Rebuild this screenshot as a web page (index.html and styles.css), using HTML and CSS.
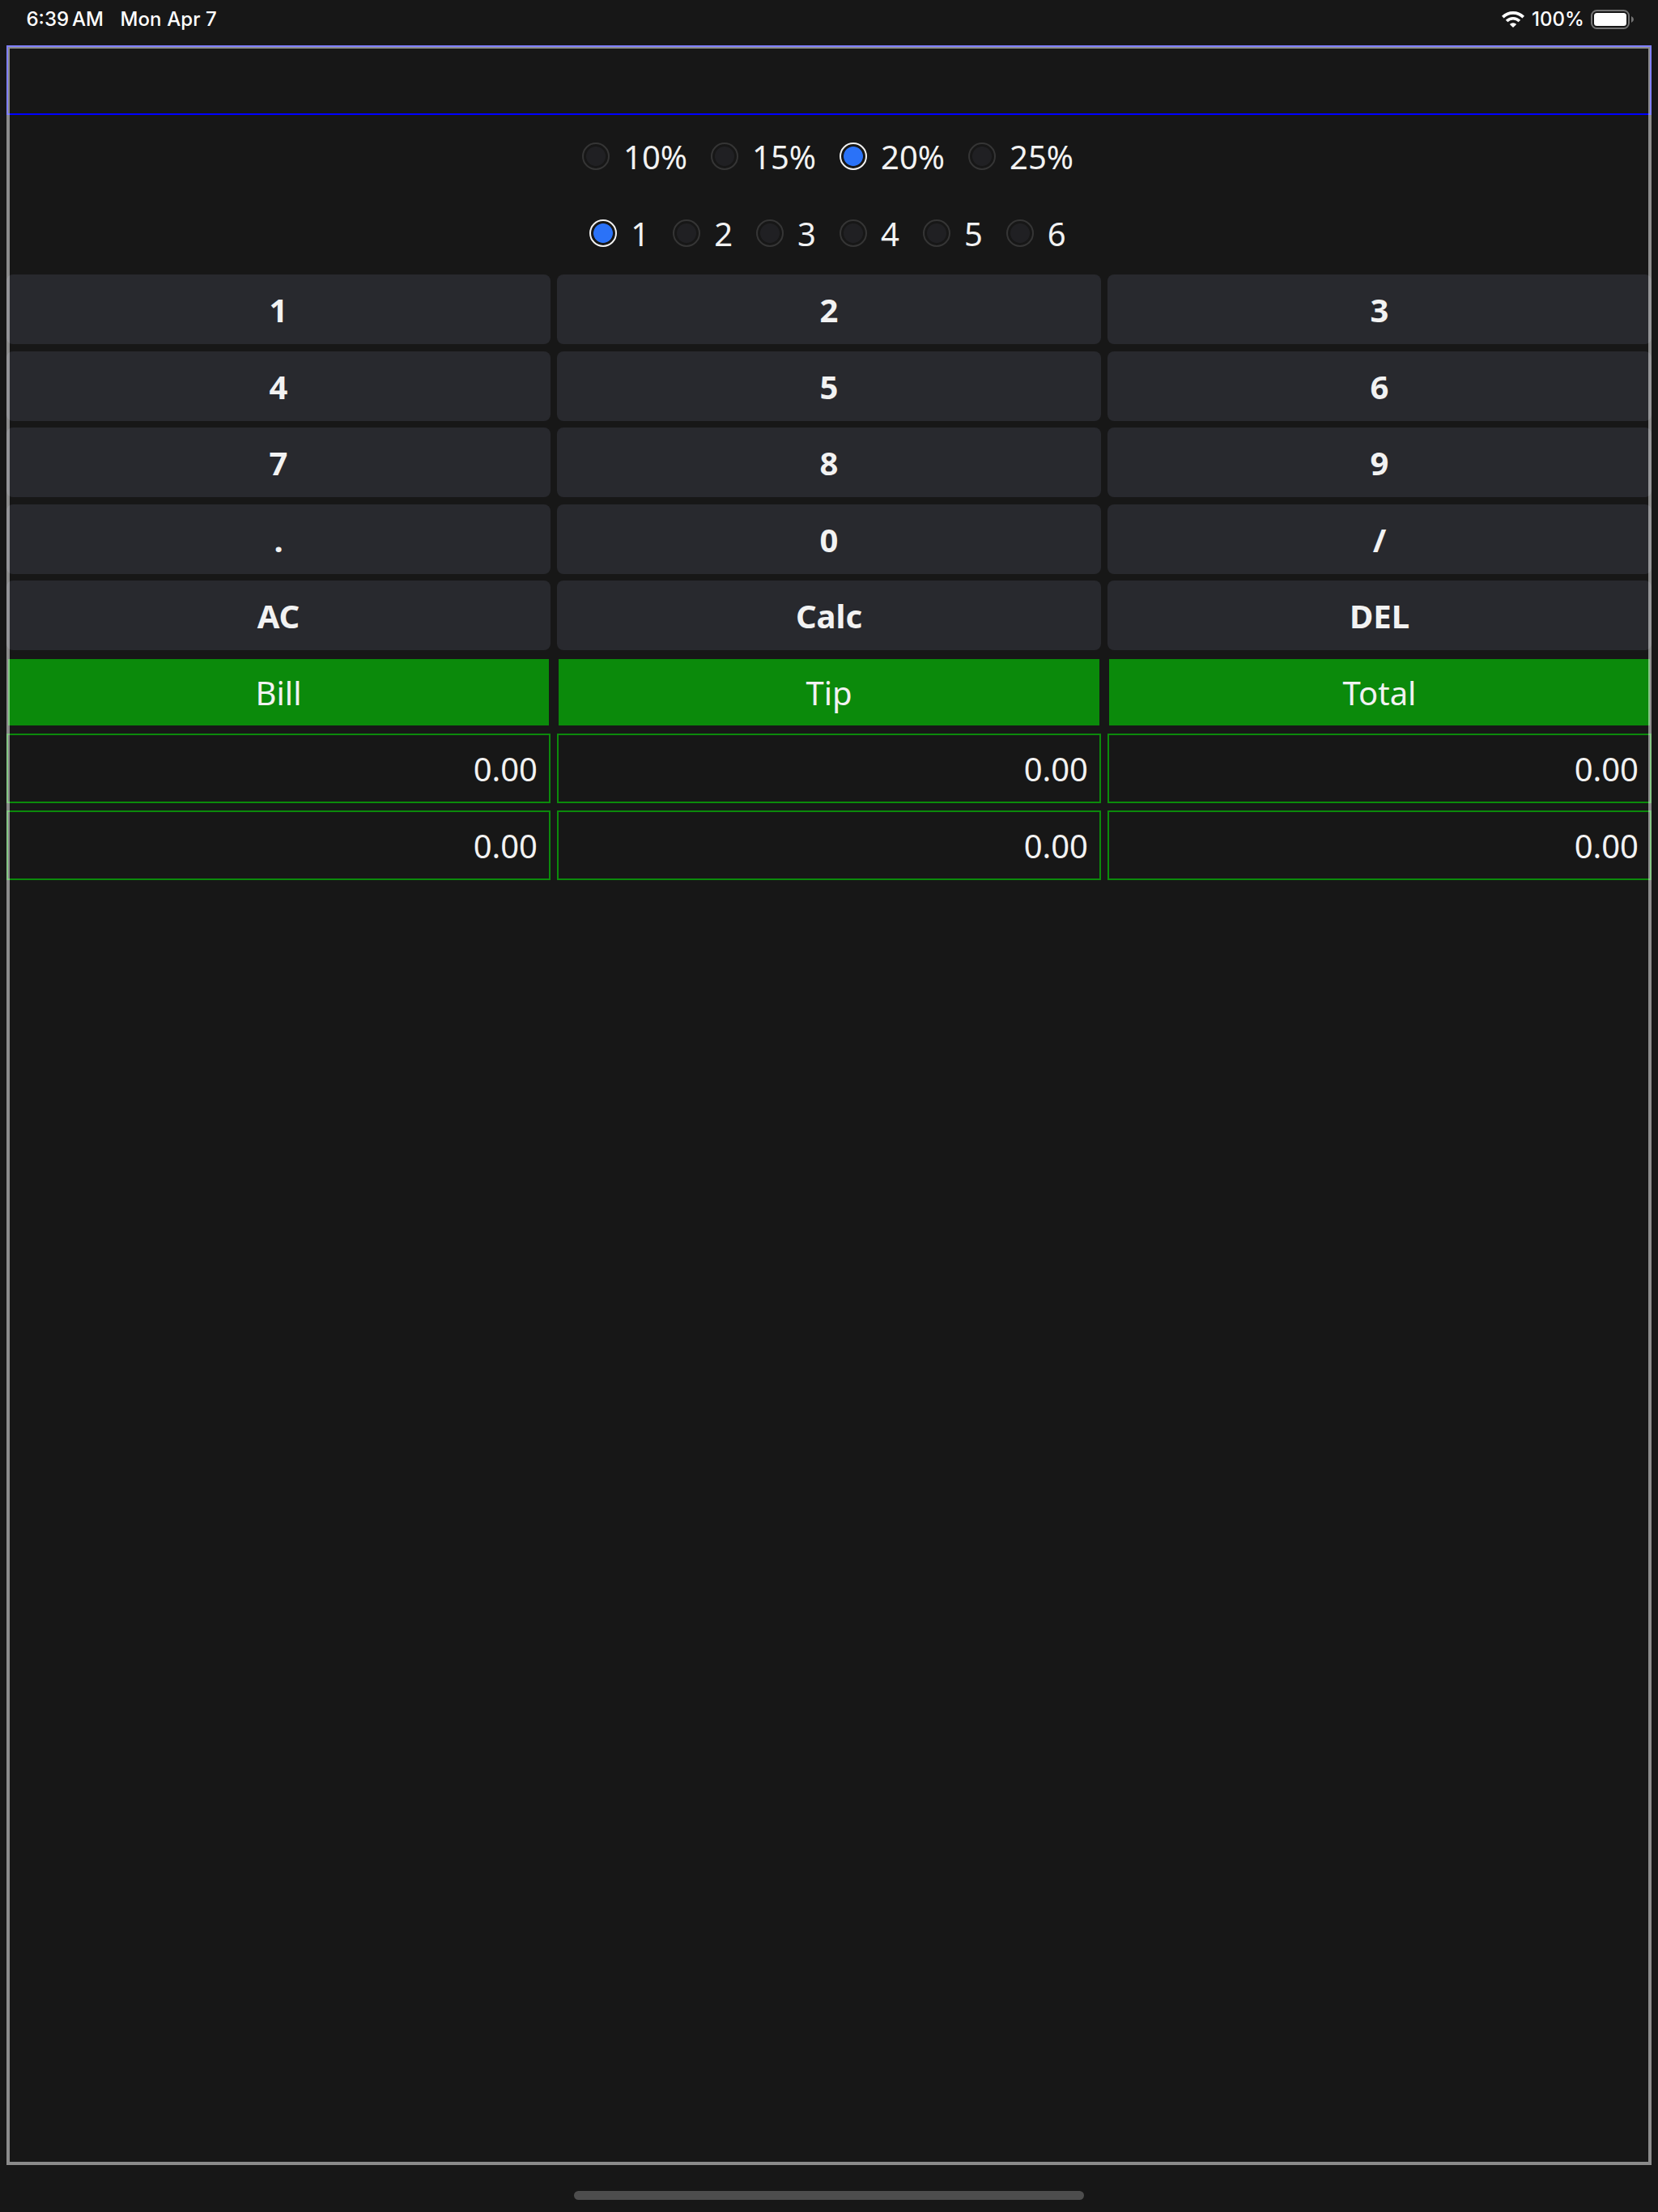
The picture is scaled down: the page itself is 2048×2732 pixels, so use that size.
FILE: index.html
```html
<!DOCTYPE html>
<html lang="en">
<head>
<meta charset="utf-8">
<title>Tip Calculator</title>
<link rel="stylesheet" href="styles.css">
</head>
<body>
<header class="status">
  <span class="time">6:39<span class="thin"></span>AM</span>
  <span class="date">Mon Apr 7</span>
  <svg class="wifi" width="28" height="20" viewBox="0 0 28 20" fill="none" stroke="#fff" stroke-width="3.7">
    <path d="M1.3 7.1a18 18 0 0 1 25.4 0"/>
    <path d="M6.1 12a11.2 11.2 0 0 1 15.8 0"/>
    <path d="M14 20l-4.2-4.1a6 6 0 0 1 8.4 0z" fill="#fff" stroke="none"/>
  </svg>
  <span class="percent">100%</span>
  <svg class="battery" width="54" height="24" viewBox="0 0 54 24">
    <rect x="1" y="1" width="46" height="22" rx="6.5" fill="none" stroke="#747474" stroke-width="2"/>
    <rect x="4" y="4" width="40" height="16" rx="3.5" fill="#fff"/>
    <path d="M50 8q3 1.3 3 4t-3 4z" fill="#747474"/>
  </svg>
</header>
<main class="app">
  <div class="grid">
    <div class="display"></div>
    <div class="radios">
      <label><input type="radio" name="tip"><span>10%</span></label>
      <label><input type="radio" name="tip"><span>15%</span></label>
      <label><input type="radio" name="tip" checked><span>20%</span></label>
      <label><input type="radio" name="tip"><span>25%</span></label>
    </div>
    <div class="radios">
      <label><input type="radio" name="split" checked><span>1</span></label>
      <label><input type="radio" name="split"><span>2</span></label>
      <label><input type="radio" name="split"><span>3</span></label>
      <label><input type="radio" name="split"><span>4</span></label>
      <label><input type="radio" name="split"><span>5</span></label>
      <label><input type="radio" name="split"><span>6</span></label>
    </div>
    <button>1</button><button>2</button><button>3</button>
    <button>4</button><button>5</button><button>6</button>
    <button>7</button><button>8</button><button>9</button>
    <button>.</button><button>0</button><button>/</button>
    <button>AC</button><button>Calc</button><button>DEL</button>
    <div class="heading">Bill</div><div class="heading">Tip</div><div class="heading">Total</div>
    <div class="amount">0.00</div><div class="amount">0.00</div><div class="amount">0.00</div>
    <div class="amount">0.00</div><div class="amount">0.00</div><div class="amount">0.00</div>
  </div>
</main>
<footer class="home"><div class="home-bar"></div></footer>
</body>
</html>
```
FILE: styles.css
```css
* {
  box-sizing: border-box;
}

body {
  margin: 0;
  height: 2732px;
  display: flex;
  flex-direction: column;
  background: #171717;
  color: #f2f2f2;
  font: 40px/54.48px "Noto Sans", sans-serif;
  overflow: hidden;
}

.status {
  height: 56px;
  padding: 0 29px 8px 32.5px;
  display: flex;
  align-items: center;
  color: #fff;
  font: 450 24px/29px Inter, sans-serif;
  white-space: nowrap;
}

.status > span {
  padding-bottom: 2px;
}

.time {
  width: 116px;
}

.thin {
  display: inline-block;
  width: 4px;
}

.date {
  letter-spacing: 0.1px;
}

.wifi {
  margin-left: auto;
}

.percent {
  width: 65px;
  margin: 0 8px 0 9px;
}

.app {
  position: relative;
  height: 2618px;
  margin: 0 8px;
}

/* translucent focus frame drawn over the grid */
.app::after {
  content: "";
  position: absolute;
  inset: 0;
  border: 4px solid rgba(255, 255, 255, 0.5);
  pointer-events: none;
}

.grid {
  display: grid;
  grid-template-columns: repeat(3, 1fr);
  grid-auto-rows: 86px;
  gap: 8.5px 8px;
  margin-top: -0.1px;
}

.display,
.radios {
  grid-column: 1 / -1;
}

.display {
  border: 2px solid #00f;
}

.radios {
  display: flex;
  justify-content: center;
  align-items: center;
  gap: 29px;
  padding-right: 3px;
}

.radios label {
  display: flex;
  align-items: center;
  gap: 17px;
}

.radios span {
  padding-top: 2px;
}

.radios input {
  appearance: none;
  width: 34px;
  height: 34px;
  margin: 0;
  border: 2px solid #353535;
  border-radius: 50%;
  background: radial-gradient(circle closest-side, #202023 11.5px, transparent 12.3px);
}

.radios input:checked {
  border-color: #f2f2f2;
  background: radial-gradient(circle closest-side, #2a72f8 11.5px, transparent 12.3px);
}

button {
  padding: 2px 0 0;
  border: 0;
  border-radius: 8px;
  background: #28292e;
  color: inherit;
  font: inherit;
  font-weight: 700;
}

.heading {
  padding: 15px 14px 13px;
  border: 2px solid transparent;
  background: #0b8a0b;
  background-clip: padding-box;
  text-align: center;
}

.amount {
  padding: 15px 14px 13px;
  border: 2px solid #0b8a0b;
  text-align: right;
}

.home {
  height: 58px;
  padding-top: 32px;
}

.home-bar {
  width: 630px;
  height: 11px;
  margin: 0 auto;
  border-radius: 6px;
  background: #4d4d4d;
}
```
